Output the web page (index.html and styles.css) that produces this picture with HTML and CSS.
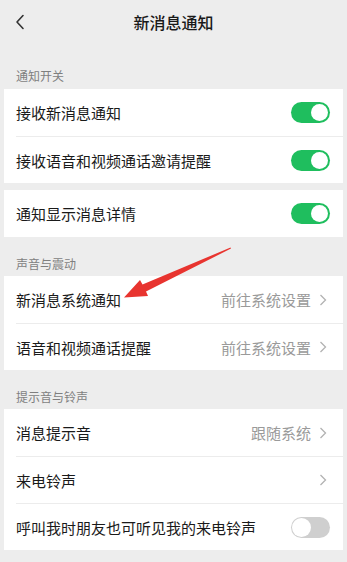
FILE: index.html
```html
<!DOCTYPE html>
<html lang="zh">
<head>
<meta charset="utf-8">
<link rel="stylesheet" href="styles.css">
</head>
<body>
<div class="page">
  <header class="nav">
    <svg class="back" width="10" height="16" viewBox="0 0 10 16"><path d="M8 1.5 L2 8 L8 14.5" fill="none" stroke="#333" stroke-width="1.6" stroke-linecap="round" stroke-linejoin="round"/></svg>
    <div class="title">新消息通知</div>
  </header>

  <div class="label first">通知开关</div>
  <div class="card">
    <div class="row"><span class="text">接收新消息通知</span><span class="switch on"></span></div>
    <div class="row"><span class="text">接收语音和视频通话邀请提醒</span><span class="switch on"></span></div>
  </div>
  <div class="card gap">
    <div class="row"><span class="text">通知显示消息详情</span><span class="switch on"></span></div>
  </div>

  <div class="label">声音与震动</div>
  <div class="card">
    <div class="row"><span class="text">新消息系统通知</span><span class="value">前往系统设置</span><svg class="chev" width="8" height="12" viewBox="0 0 8 12"><path d="M1.5 1 L6.5 6 L1.5 11" fill="none" stroke="#b2b2b2" stroke-width="1.3"/></svg></div>
    <div class="row"><span class="text">语音和视频通话提醒</span><span class="value">前往系统设置</span><svg class="chev" width="8" height="12" viewBox="0 0 8 12"><path d="M1.5 1 L6.5 6 L1.5 11" fill="none" stroke="#b2b2b2" stroke-width="1.3"/></svg></div>
  </div>

  <div class="label">提示音与铃声</div>
  <div class="card">
    <div class="row"><span class="text">消息提示音</span><span class="value">跟随系统</span><svg class="chev" width="8" height="12" viewBox="0 0 8 12"><path d="M1.5 1 L6.5 6 L1.5 11" fill="none" stroke="#b2b2b2" stroke-width="1.3"/></svg></div>
    <div class="row"><span class="text">来电铃声</span><span class="value"></span><svg class="chev" width="8" height="12" viewBox="0 0 8 12"><path d="M1.5 1 L6.5 6 L1.5 11" fill="none" stroke="#b2b2b2" stroke-width="1.3"/></svg></div>
    <div class="row"><span class="text">呼叫我时朋友也可听见我的来电铃声</span><span class="switch off"></span></div>
  </div>

  <svg class="arrow" width="347" height="562" viewBox="0 0 347 562">
    <polygon points="231,248.5 146,291.5 148,296 124,297.5 140,280 142.5,284.5 230.5,247.5" fill="#e8342f"/>
  </svg>
</div>
</body>
</html>
```

FILE: styles.css
```css
* { box-sizing: border-box; }
html, body { margin: 0; padding: 0; }
body {
  background: #ededed;
  font-family: "Noto Sans CJK SC", "Noto Sans", sans-serif;
  color: #1a1a1a;
}
.page {
  position: relative;
  width: 347px;
  height: 562px;
  overflow: hidden;
  background: #ededed;
}
.nav {
  height: 44px;
  display: flex;
  align-items: center;
  justify-content: center;
  position: relative;
}
.back {
  position: absolute;
  left: 15px;
  top: 14px;
}
.title {
  font-size: 16px;
  font-weight: 500;
  color: #191919;
}
.label {
  padding: 19px 16px 4px;
  font-size: 12px;
  line-height: 16px;
  color: #7f7f7f;
}
.label.first { padding-top: 24px; padding-bottom: 5px; }
.card {
  margin: 0 4px;
  background: #fff;
}
.card.gap { margin-top: 7px; }
.row {
  height: 47px;
  margin-left: 12px;
  padding-right: 13px;
  display: flex;
  align-items: center;
  border-top: 1px solid #ececec;
}
.row:first-child { border-top: none; }
.text {
  flex: 1;
  font-size: 15px;
  color: #1a1a1a;
}
.value {
  font-size: 15px;
  color: #9a9a9a;
  margin-right: 8px;
}
.chev { margin-right: 3px; }
.switch {
  position: relative;
  width: 39px;
  height: 21px;
  border-radius: 11px;
}
.switch.on { background: #1fbe5e; }
.switch.on::after {
  content: "";
  position: absolute;
  right: 2px;
  top: 2px;
  width: 17px;
  height: 17px;
  border-radius: 50%;
  background: #fff;
}
.switch.off {
  background: #cfcfcf;
}
.switch.off::after {
  content: "";
  position: absolute;
  left: 1px;
  top: 1px;
  width: 19px;
  height: 19px;
  border-radius: 50%;
  background: #fff;
}
.arrow {
  position: absolute;
  left: 0;
  top: 0;
  pointer-events: none;
}
```
